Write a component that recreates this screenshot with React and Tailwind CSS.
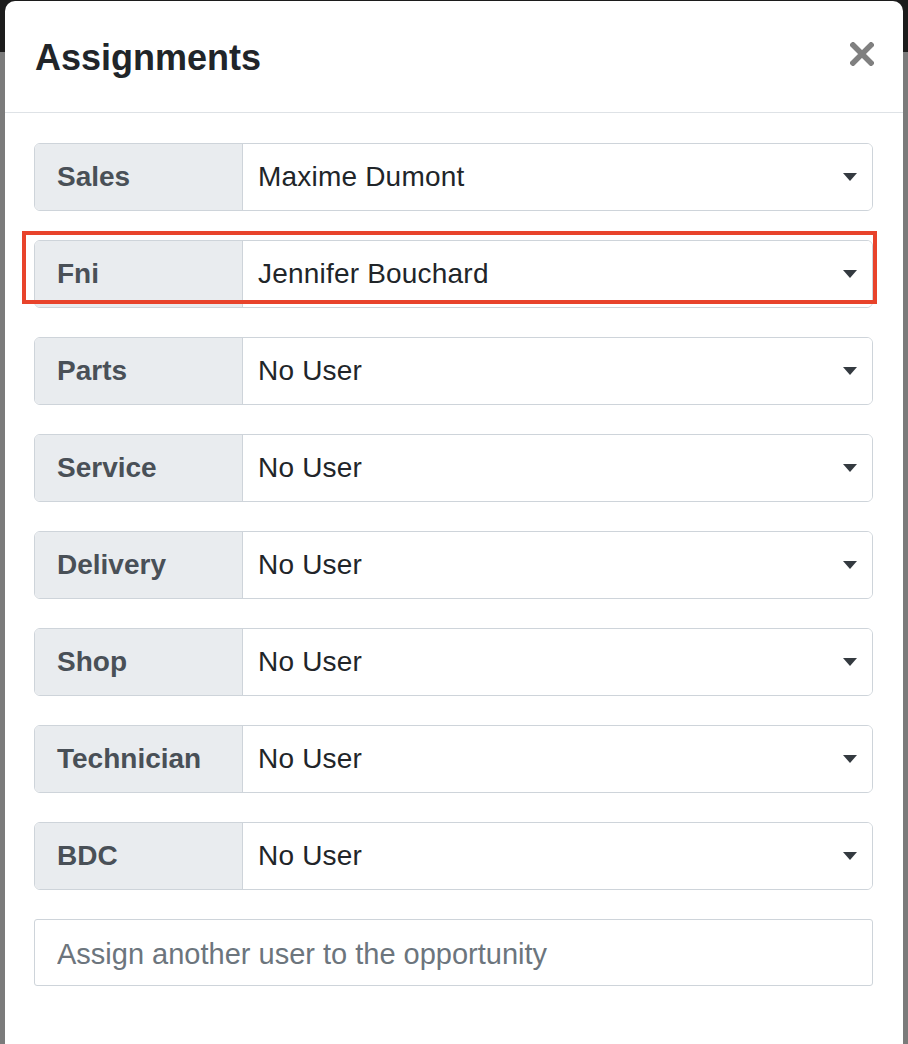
import React from "react";

const rows = [
  { label: "Sales", value: "Maxime Dumont" },
  { label: "Fni", value: "Jennifer Bouchard", highlight: true },
  { label: "Parts", value: "No User" },
  { label: "Service", value: "No User" },
  { label: "Delivery", value: "No User" },
  { label: "Shop", value: "No User" },
  { label: "Technician", value: "No User" },
  { label: "BDC", value: "No User" },
];

const Caret = () => (
  <svg width="14" height="8" viewBox="0 0 14 8" className="shrink-0">
    <path d="M0 0 L14 0 L7 8 Z" fill="#343a40" />
  </svg>
);

const AssignRow = ({ label, value, highlight }) => (
  <div className="relative">
    {/* annotation box */}
    {highlight && (
      <div className="absolute left-[-12px] right-[-4px] top-[-9px] h-[73px] border-[4px] border-[#e8432b] z-10 pointer-events-none"></div>
    )}
    <div className="flex h-[68px] rounded-md border border-[#ced4da] overflow-hidden">
      <div className="w-[208px] shrink-0 bg-[#e9ecef] border-r border-[#ced4da] flex items-center pl-[22px] text-[28px] font-bold text-[#495057]">
        {label}
      </div>
      <div className="flex-1 bg-white flex items-center justify-between pl-[15px] pr-[15px] text-[28px] tracking-[0.2px] text-[#212529]">
        <span>{value}</span>
        <Caret />
      </div>
    </div>
  </div>
);

export default function App() {
  return (
    <div
      className="min-h-screen h-[1044px] overflow-hidden bg-[linear-gradient(#1c1c1c_0_52px,#7b7b7b_52px)] pt-px px-[5px]"
      style={{ fontFamily: '"Liberation Sans", Arial, sans-serif' }}
    >
      <div className="bg-white rounded-t-[10px] h-[1100px]">
        {/* Header */}
        <div className="h-[112px] flex items-center justify-between pl-[30px] pr-[29px] border-b border-[#dee2e6]">
          <h4 className="text-[36px] font-bold text-[#212529] pt-[2px]">Assignments</h4>
          <button className="-mt-[6px]">
            <svg width="24" height="24" viewBox="0 0 24 24">
              <path d="M3 3 L21 21 M21 3 L3 21" stroke="#808080" strokeWidth="5.5" strokeLinecap="square" />
            </svg>
          </button>
        </div>

        {/* Body */}
        <div className="pt-[30px] pl-[29px] pr-[30px] flex flex-col gap-[29px]">
          {rows.map((r) => (
            <AssignRow key={r.label} {...r} />
          ))}
          <input
            type="text"
            placeholder="Assign another user to the opportunity"
            className="h-[67px] w-full border border-[#ced4da] rounded-[3px] px-[22px] pt-[3px] text-[29px] text-[#212529] placeholder:text-[#6c757d] outline-none"
          />
        </div>
      </div>
    </div>
  );
}
